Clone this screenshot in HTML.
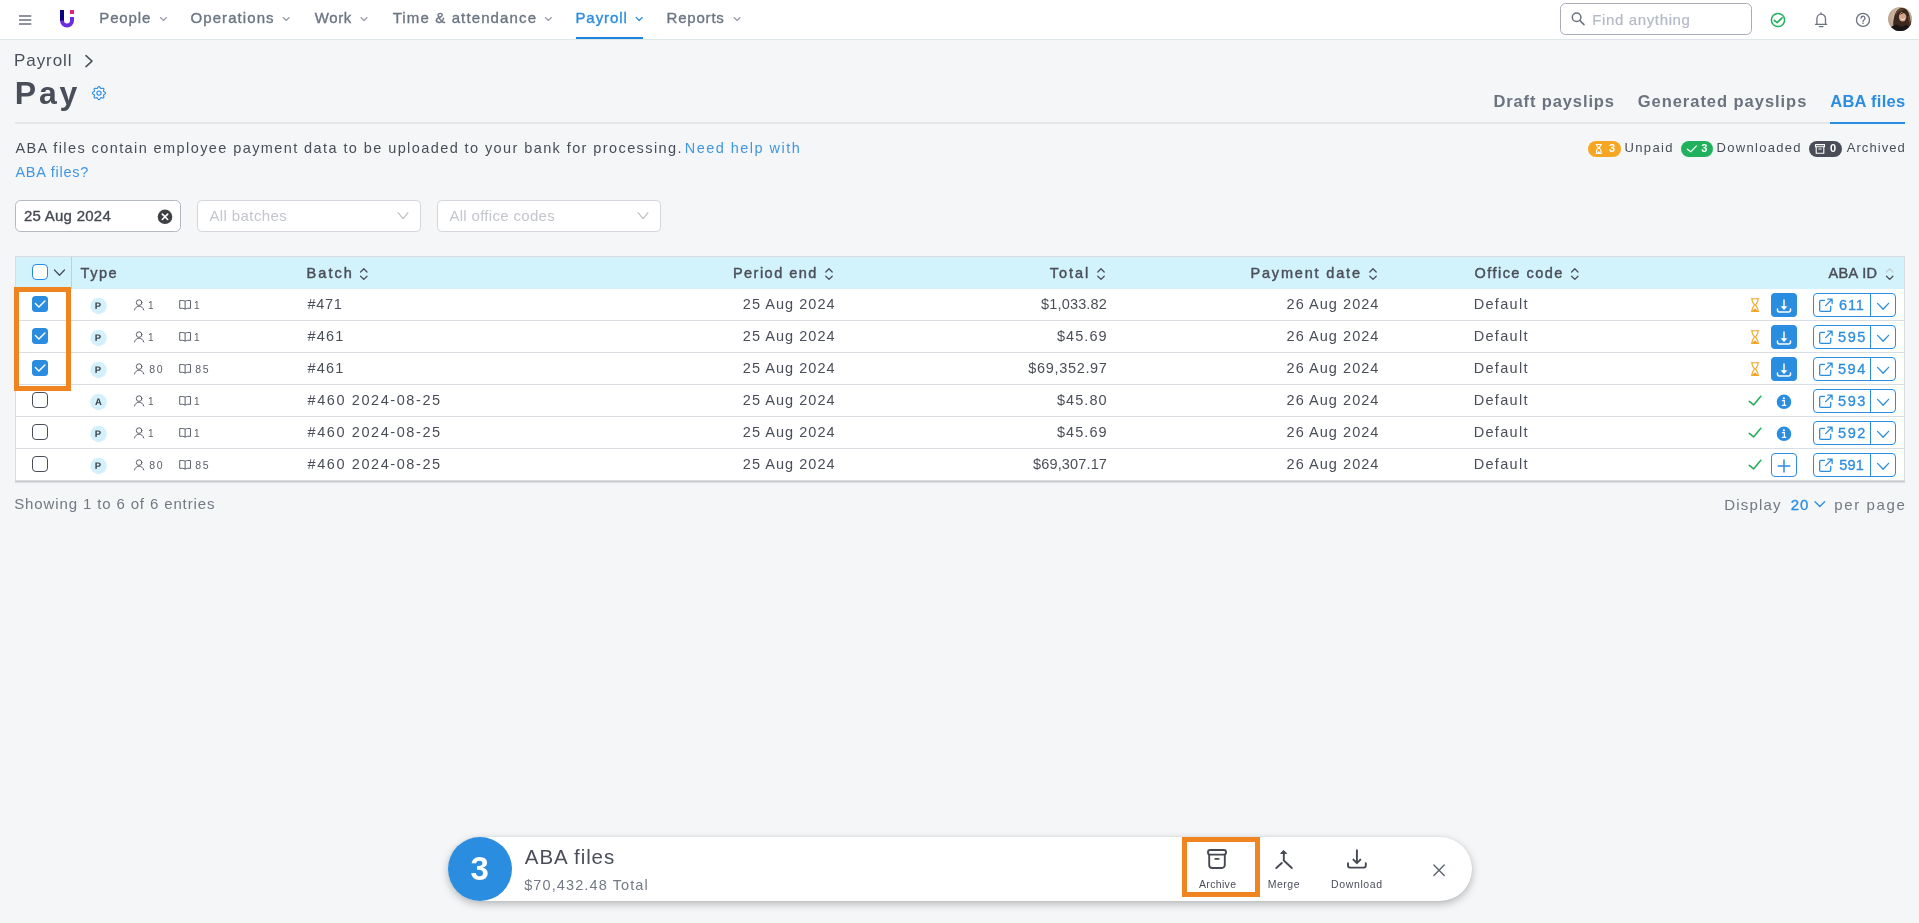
<!DOCTYPE html>
<html lang="en"><head><meta charset="utf-8"><title>Pay - ABA files</title>
<style>
*{box-sizing:border-box;margin:0;padding:0}
html,body{width:1919px;height:923px;overflow:hidden;background:#f4f6f8;font-family:"Liberation Sans",sans-serif}
.t{position:absolute;white-space:pre;line-height:20px;font-family:"Liberation Sans",sans-serif}
.a{position:absolute}
svg{position:absolute;overflow:visible}
#texts{position:absolute;left:0;top:0;width:1919px;height:923px;will-change:transform}

</style></head>
<body>
<!-- NAV -->
<div class="a" style="left:0;top:0;width:1919px;height:40px;background:#fff;border-bottom:1px solid #dde5e8"></div>
<svg style="left:0;top:0" width="1919" height="40" viewBox="0 0 1919 40" fill="none">
  <!-- hamburger -->
  <g stroke="#6b7280" stroke-width="1.7"><path d="M19 16H31.3M19 20H31.3M19 24H31.3"/></g>
  <!-- logo -->
  <rect x="60" y="10" width="4" height="11" fill="#0a0082"/>
  <rect x="70" y="10" width="4" height="4" fill="#e8207c"/>
  <path d="M60 20.5 A7 7 0 0 0 74 20.5 V17 H70 V20.5 A3 3 0 0 1 64 20.5 Z" fill="#6a2ce0"/>
  <!-- nav chevrons -->
  <g stroke="#949ba7" stroke-width="1.1" stroke-linecap="round" stroke-linejoin="round">
    <path d="M160.5 17.5l3 3 3-3"/><path d="M283.2 17.5l3 3 3-3"/><path d="M361 17.5l3 3 3-3"/>
    <path d="M545.3 17.5l3 3 3-3"/><path d="M734.1 17.5l3 3 3-3"/>
  </g>
  <path d="M636.2 17.5l3 3 3-3" stroke="#2b8ddf" stroke-width="1.2" stroke-linecap="round" stroke-linejoin="round"/>
  <rect x="576" y="37" width="67" height="2" fill="#1f84dc"/>
  <!-- search -->
  <rect x="1560.5" y="3.5" width="191" height="31" rx="5" fill="#fff" stroke="#a9adbb"/>
  <g stroke="#6b7280" stroke-width="1.5" stroke-linecap="round"><circle cx="1576.6" cy="17.2" r="4.3"/><path d="M1580 20.6l4 4"/></g>
  <!-- status check -->
  <circle cx="1778" cy="20" r="6.6" stroke="#21b15d" stroke-width="1.5"/>
  <path d="M1774.3 20.3l2.8 2.3 4.9-4.8" stroke="#21b15d" stroke-width="1.7" stroke-linecap="round" stroke-linejoin="round"/>
  <!-- bell -->
  <g stroke="#6b7280" stroke-width="1.3" stroke-linecap="round" stroke-linejoin="round">
    <path d="M1815.5 24.3h11.2M1816.9 24.3v-5.6a4.3 4.6 0 0 1 8.6 0v5.6M1819.4 26.6h3.6"/>
    <path d="M1821 13.8v-.8"/>
  </g>
  <!-- help -->
  <circle cx="1863" cy="19.9" r="6.5" stroke="#6b7280" stroke-width="1.3"/>
  <path d="M1861 18.2a2 2 0 1 1 2.9 1.8c-.6.4-.9.7-.9 1.5" stroke="#6b7280" stroke-width="1.3" stroke-linecap="round"/>
  <circle cx="1863" cy="23.3" r=".8" fill="#6b7280"/>
  <!-- avatar -->
  <defs><clipPath id="av"><circle cx="1900" cy="19" r="12"/></clipPath>
  <radialGradient id="avbg" cx=".5" cy=".4" r=".7"><stop offset="0" stop-color="#d9c4b0"/><stop offset="1" stop-color="#b39b86"/></radialGradient></defs>
  <g clip-path="url(#av)">
    <rect x="1888" y="7" width="24" height="24" fill="url(#avbg)"/>
    <path d="M1894.500 29c-1.500-3-1.800-7-.5-11 .8-5 3.500-9.500 7.500-10 4.500-.5 7 3 7.800 7 .8 4 1.700 8 2.700 11l-4 5h-12z" fill="#3b281e"/>
    <path d="M1896 14c1.500-3 4-4.500 6.500-4.500M1908.500 17c.8 3 1.200 6 2.200 8.500" stroke="#6a4935" stroke-width="1.300" fill="none" stroke-linecap="round"/>
    <ellipse cx="1902.600" cy="16.800" rx="3.700" ry="4.800" fill="#d4a488"/>
    <path d="M1899 14.500c1.500-.5 4-2 5-4 1 1.500 2 3 2.600 5-1-1-2-2-2.800-2.400-1.200 1-3 1.600-4.800 1.400z" fill="#3b281e"/>
    <path d="M1901 18.800c1 1 2.400 1 3.400 0" stroke="#fff" stroke-width=".9" fill="none" stroke-linecap="round"/>
    <path d="M1889 31c1-4 4-6 8-6.500 1.500 1.500 3 2 4.500 2 1.500 0 3-.5 4-1.800 2.500.8 4.500 2.800 5.500 6.300z" fill="#191516"/>
  </g>
</svg>
<!-- HEADER AREA -->
<div class="a" style="left:15px;top:122px;width:1889px;height:2px;background:#e3e5e9"></div>
<div class="a" style="left:1830px;top:122px;width:75px;height:2px;background:#2b8ddf"></div>
<svg style="left:0;top:40px" width="1919" height="200" viewBox="0 40 1919 200" fill="none">
  <path d="M86 55.600l6 5.500-6 5.500" stroke="#4a4e58" stroke-width="1.5" stroke-linecap="round" stroke-linejoin="round"/>
  <!-- gear -->
  <g stroke="#2b8ddf" stroke-width="1.150" stroke-linejoin="round">
    <path d="M99.00 86.60 L99.42 86.71 L99.80 87.03 L100.12 87.46 L100.39 87.91 L100.64 88.27 L100.91 88.48 L101.26 88.53 L101.69 88.45 L102.19 88.32 L102.73 88.24 L103.22 88.29 L103.60 88.50 L103.81 88.88 L103.86 89.37 L103.78 89.91 L103.65 90.41 L103.57 90.84 L103.62 91.19 L103.83 91.46 L104.19 91.71 L104.64 91.98 L105.07 92.30 L105.39 92.68 L105.50 93.10 L105.39 93.52 L105.07 93.90 L104.64 94.22 L104.19 94.49 L103.83 94.74 L103.62 95.01 L103.57 95.36 L103.65 95.79 L103.78 96.29 L103.86 96.83 L103.81 97.32 L103.60 97.70 L103.22 97.91 L102.73 97.96 L102.19 97.88 L101.69 97.75 L101.26 97.67 L100.91 97.72 L100.64 97.93 L100.39 98.29 L100.12 98.74 L99.80 99.17 L99.42 99.49 L99.00 99.60 L98.58 99.49 L98.20 99.17 L97.88 98.74 L97.61 98.29 L97.36 97.93 L97.09 97.72 L96.74 97.67 L96.31 97.75 L95.81 97.88 L95.27 97.96 L94.78 97.91 L94.40 97.70 L94.19 97.32 L94.14 96.83 L94.22 96.29 L94.35 95.79 L94.43 95.36 L94.38 95.01 L94.17 94.74 L93.81 94.49 L93.36 94.22 L92.93 93.90 L92.61 93.52 L92.50 93.10 L92.61 92.68 L92.93 92.30 L93.36 91.98 L93.81 91.71 L94.17 91.46 L94.38 91.19 L94.43 90.84 L94.35 90.41 L94.22 89.91 L94.14 89.37 L94.19 88.88 L94.40 88.50 L94.78 88.29 L95.27 88.24 L95.81 88.32 L96.31 88.45 L96.74 88.53 L97.09 88.48 L97.36 88.27 L97.61 87.91 L97.88 87.46 L98.20 87.03 L98.58 86.71Z"/>
    <circle cx="99" cy="93.1" r="2.100"/>
  </g>
  <!-- badges -->
  <rect x="1588" y="141" width="33" height="16" rx="8" fill="#f5a623"/>
  <path d="M1596 144.500h5.500M1596 153.500h5.500M1596.600 144.500c0 3 4.300 3.600 4.300 6v3M1600.900 144.500c0 3-4.300 3.600-4.300 6v3" stroke="#fff" stroke-width="1.100" stroke-linecap="round"/>
  <path d="M1597 153.300l1.750-2.200 1.750 2.200z" fill="#fff"/>
  <rect x="1681" y="141" width="32" height="16" rx="8" fill="#21b15d"/>
  <path d="M1687.300 149.200l3.500 2.600 5.600-5.900" stroke="#fff" stroke-width="1.200" stroke-linecap="round" stroke-linejoin="round"/>
  <rect x="1809" y="141" width="33" height="16" rx="8" fill="#4a4d57"/>
  <g stroke="#fff" stroke-width="1.100" stroke-linejoin="round"><path d="M1815.500 144.600h9v2.200h-9z"/><path d="M1816.200 146.800v6.400h7.600v-6.400"/><path d="M1818.800 149h2.400" stroke-linecap="round"/></g>
  <!-- filters -->
  <rect x="15.500" y="200.500" width="165" height="31" rx="5" fill="#fff" stroke="#b4b8c5"/>
  <circle cx="165" cy="216.800" r="7.300" fill="#3f4045"/>
  <path d="M162.300 214.100l5.400 5.400M167.700 214.100l-5.400 5.400" stroke="#fff" stroke-width="1.600" stroke-linecap="round"/>
  <rect x="197.500" y="200.500" width="223" height="31" rx="4" fill="#fff" stroke="#d3d6dc"/>
  <path d="M398 212.700l5 6 5-6" stroke="#b9bcc4" stroke-width="1.100" stroke-linecap="round" stroke-linejoin="round"/>
  <rect x="437.500" y="200.500" width="223" height="31" rx="4" fill="#fff" stroke="#d3d6dc"/>
  <path d="M638 212.700l5 6 5-6" stroke="#b9bcc4" stroke-width="1.100" stroke-linecap="round" stroke-linejoin="round"/>
</svg>
<!-- TABLE -->
<div class="a" style="left:15px;top:256px;width:1890px;height:224px;background:#fff;border:1px solid #d9dbdf;border-bottom:0"></div>
<div class="a" style="left:15px;top:480px;width:1890px;height:1px;background:#d9dbde"></div>
<div class="a" style="left:15px;top:481px;width:1890px;height:1px;background:#c6c7ca"></div>
<div class="a" style="left:15px;top:482px;width:1890px;height:1px;background:#e0e2e5"></div>
<div class="a" style="left:15px;top:483px;width:1890px;height:1px;background:#eef0f2"></div>
<div class="a" style="left:16px;top:257px;width:1888px;height:32px;background:#d2f3fc"></div>
<div class="a" style="left:71px;top:257px;width:1px;height:32px;background:#c3cfd6"></div>
<div class="a" style="left:16px;top:320px;width:1888px;height:1px;background:#d9dce1"></div>
<div class="a" style="left:16px;top:352px;width:1888px;height:1px;background:#d9dce1"></div>
<div class="a" style="left:16px;top:384px;width:1888px;height:1px;background:#d9dce1"></div>
<div class="a" style="left:16px;top:416px;width:1888px;height:1px;background:#d9dce1"></div>
<div class="a" style="left:16px;top:448px;width:1888px;height:1px;background:#d9dce1"></div>
<svg style="left:0;top:250px" width="1919" height="240" viewBox="0 250 1919 240" fill="none">
<rect x="32.500" y="264.500" width="15" height="15" rx="3.500" fill="#fff" stroke="#2b8ddf"/>
<path d="M54.500 270l5 5.300 5-5.300" stroke="#4a4e58" stroke-width="1.300" stroke-linecap="round" stroke-linejoin="round"/>
<path d="M360.6 272l3.200-3.200 3.200 3.200" stroke="#4a4e58" stroke-width="1.300" stroke-linecap="round" stroke-linejoin="round"/>
<path d="M360.6 276.200l3.200 3.200 3.200-3.200" stroke="#4a4e58" stroke-width="1.300" stroke-linecap="round" stroke-linejoin="round"/>
<path d="M825.8 272l3.200-3.200 3.200 3.200" stroke="#4a4e58" stroke-width="1.300" stroke-linecap="round" stroke-linejoin="round"/>
<path d="M825.8 276.200l3.200 3.200 3.200-3.200" stroke="#4a4e58" stroke-width="1.300" stroke-linecap="round" stroke-linejoin="round"/>
<path d="M1097.8 272l3.200-3.200 3.200 3.200" stroke="#4a4e58" stroke-width="1.300" stroke-linecap="round" stroke-linejoin="round"/>
<path d="M1097.8 276.200l3.200 3.200 3.200-3.200" stroke="#4a4e58" stroke-width="1.300" stroke-linecap="round" stroke-linejoin="round"/>
<path d="M1369.8 272l3.200-3.200 3.200 3.200" stroke="#4a4e58" stroke-width="1.300" stroke-linecap="round" stroke-linejoin="round"/>
<path d="M1369.8 276.200l3.200 3.200 3.200-3.200" stroke="#4a4e58" stroke-width="1.300" stroke-linecap="round" stroke-linejoin="round"/>
<path d="M1571.6 272l3.200-3.200 3.200 3.200" stroke="#4a4e58" stroke-width="1.300" stroke-linecap="round" stroke-linejoin="round"/>
<path d="M1571.6 276.200l3.200 3.200 3.200-3.200" stroke="#4a4e58" stroke-width="1.300" stroke-linecap="round" stroke-linejoin="round"/>
<path d="M1886.5 272l3.200-3.200 3.200 3.200" stroke="#c5cdd3" stroke-width="1.300" stroke-linecap="round" stroke-linejoin="round"/>
<path d="M1886.5 276.200l3.200 3.200 3.200-3.200" stroke="#4a4e58" stroke-width="1.300" stroke-linecap="round" stroke-linejoin="round"/>
<rect x="32" y="296" width="16" height="16" rx="3.500" fill="#2b8ddf"/>
<path d="M35.400 303.6l3.500 3.400 6-6.100" stroke="#fff" stroke-width="1.400" stroke-linecap="round" stroke-linejoin="round"/>
<circle cx="98.500" cy="306" r="8.300" fill="#d4f1fb"/>
<g stroke="#5a5f69" stroke-width="1" stroke-linecap="round"><circle cx="139.100" cy="302.6" r="2.800"/><path d="M134.400 310c.8-2.600 2.700-3.800 4.700-3.800s3.900 1.200 4.700 3.800"/></g>
<g stroke="#5a5f69" stroke-width="1" stroke-linejoin="round"><path d="M185.100 301.2c-1.400-.7-3.400-.9-5.400-.6v7.800c2-.3 4-.1 5.400.7c1.400-.8 3.400-1 5.400-.7v-7.800c-2-.3-4-.1-5.400.6z"/><path d="M185.100 301.2v7.900"/></g>
<g stroke="#f5a623" stroke-width="1.150" stroke-linecap="round" stroke-linejoin="round" fill="none"><path d="M1751.400 298.7H1758.600M1751.400 311.3H1758.600"/><path d="M1752.100 298.7V300.3C1752.100 302.9 1754.400 303.9 1754.400 305.0C1754.400 306.1 1752.100 307.1 1752.100 309.7V311.3"/><path d="M1757.900 298.7V300.3C1757.900 302.9 1755.600 303.9 1755.600 305.0C1755.600 306.1 1757.900 307.1 1757.900 309.7V311.3"/></g><path d="M1752.700 311.3C1753.300 309.4 1754.200 308.6 1755 308.6S1756.700 309.4 1757.300 311.3Z" fill="#f5a623"/>
<rect x="1771" y="293" width="26" height="24" rx="4" fill="#2b8ddf"/>
<g stroke="#fff" stroke-width="1.500" stroke-linecap="round" stroke-linejoin="round"><path d="M1784 300v8.500"/><path d="M1777.500 309v1.600a1.400 1.400 0 0 0 1.400 1.400h10.200a1.400 1.400 0 0 0 1.400-1.400v-1.600"/></g>
<path d="M1781.300 306.6h5.400l-2.700 3z" fill="#fff" stroke="#fff" stroke-width=".8" stroke-linejoin="round"/>
<rect x="1813.500" y="293.5" width="82" height="23" rx="3.500" fill="#fff" stroke="#2b8ddf"/>
<path d="M1870.500 293.5v23" stroke="#2b8ddf"/>
<g stroke="#2b8ddf" stroke-width="1.300" stroke-linecap="round" stroke-linejoin="round"><path d="M1824.500 300.3h-3.600a1.200 1.200 0 0 0-1.200 1.200v8.600a1.200 1.200 0 0 0 1.200 1.200h8.600a1.200 1.200 0 0 0 1.200-1.200v-3.800"/><path d="M1825.600 305.6l6.400-6.400M1827.800 299.2h4.300v4.300"/></g>
<path d="M1877.600 303.4l5.500 5.800 5.500-5.800" stroke="#2b8ddf" stroke-width="1.300" stroke-linecap="round" stroke-linejoin="round"/>
<rect x="32" y="328" width="16" height="16" rx="3.500" fill="#2b8ddf"/>
<path d="M35.400 335.6l3.500 3.400 6-6.100" stroke="#fff" stroke-width="1.400" stroke-linecap="round" stroke-linejoin="round"/>
<circle cx="98.500" cy="338" r="8.300" fill="#d4f1fb"/>
<g stroke="#5a5f69" stroke-width="1" stroke-linecap="round"><circle cx="139.100" cy="334.6" r="2.800"/><path d="M134.400 342c.8-2.600 2.700-3.800 4.700-3.800s3.900 1.200 4.700 3.800"/></g>
<g stroke="#5a5f69" stroke-width="1" stroke-linejoin="round"><path d="M185.100 333.2c-1.400-.7-3.400-.9-5.400-.6v7.800c2-.3 4-.1 5.400.7c1.400-.8 3.400-1 5.400-.7v-7.800c-2-.3-4-.1-5.400.6z"/><path d="M185.100 333.2v7.900"/></g>
<g stroke="#f5a623" stroke-width="1.150" stroke-linecap="round" stroke-linejoin="round" fill="none"><path d="M1751.400 330.7H1758.600M1751.400 343.3H1758.600"/><path d="M1752.100 330.7V332.3C1752.100 334.9 1754.400 335.9 1754.400 337.0C1754.400 338.1 1752.100 339.1 1752.100 341.7V343.3"/><path d="M1757.900 330.7V332.3C1757.900 334.9 1755.600 335.9 1755.600 337.0C1755.600 338.1 1757.900 339.1 1757.900 341.7V343.3"/></g><path d="M1752.700 343.3C1753.300 341.4 1754.200 340.6 1755 340.6S1756.700 341.4 1757.300 343.3Z" fill="#f5a623"/>
<rect x="1771" y="325" width="26" height="24" rx="4" fill="#2b8ddf"/>
<g stroke="#fff" stroke-width="1.500" stroke-linecap="round" stroke-linejoin="round"><path d="M1784 332v8.500"/><path d="M1777.500 341v1.600a1.400 1.400 0 0 0 1.400 1.400h10.200a1.400 1.400 0 0 0 1.400-1.400v-1.600"/></g>
<path d="M1781.300 338.6h5.400l-2.700 3z" fill="#fff" stroke="#fff" stroke-width=".8" stroke-linejoin="round"/>
<rect x="1813.500" y="325.5" width="82" height="23" rx="3.500" fill="#fff" stroke="#2b8ddf"/>
<path d="M1870.500 325.5v23" stroke="#2b8ddf"/>
<g stroke="#2b8ddf" stroke-width="1.300" stroke-linecap="round" stroke-linejoin="round"><path d="M1824.500 332.3h-3.600a1.200 1.200 0 0 0-1.200 1.200v8.600a1.200 1.200 0 0 0 1.200 1.200h8.600a1.200 1.200 0 0 0 1.200-1.200v-3.800"/><path d="M1825.600 337.6l6.400-6.400M1827.800 331.2h4.300v4.300"/></g>
<path d="M1877.600 335.4l5.500 5.800 5.500-5.800" stroke="#2b8ddf" stroke-width="1.300" stroke-linecap="round" stroke-linejoin="round"/>
<rect x="32" y="360" width="16" height="16" rx="3.500" fill="#2b8ddf"/>
<path d="M35.400 367.6l3.500 3.400 6-6.100" stroke="#fff" stroke-width="1.400" stroke-linecap="round" stroke-linejoin="round"/>
<circle cx="98.500" cy="370" r="8.300" fill="#d4f1fb"/>
<g stroke="#5a5f69" stroke-width="1" stroke-linecap="round"><circle cx="139.100" cy="366.6" r="2.800"/><path d="M134.400 374c.8-2.600 2.700-3.800 4.700-3.800s3.900 1.200 4.700 3.800"/></g>
<g stroke="#5a5f69" stroke-width="1" stroke-linejoin="round"><path d="M185.100 365.2c-1.400-.7-3.400-.9-5.400-.6v7.800c2-.3 4-.1 5.400.7c1.400-.8 3.400-1 5.400-.7v-7.800c-2-.3-4-.1-5.400.6z"/><path d="M185.100 365.2v7.900"/></g>
<g stroke="#f5a623" stroke-width="1.150" stroke-linecap="round" stroke-linejoin="round" fill="none"><path d="M1751.400 362.7H1758.600M1751.400 375.3H1758.600"/><path d="M1752.100 362.7V364.3C1752.100 366.9 1754.400 367.9 1754.400 369.0C1754.400 370.1 1752.100 371.1 1752.100 373.7V375.3"/><path d="M1757.900 362.7V364.3C1757.900 366.9 1755.600 367.9 1755.600 369.0C1755.600 370.1 1757.900 371.1 1757.900 373.7V375.3"/></g><path d="M1752.700 375.3C1753.300 373.4 1754.200 372.6 1755 372.6S1756.700 373.4 1757.300 375.3Z" fill="#f5a623"/>
<rect x="1771" y="357" width="26" height="24" rx="4" fill="#2b8ddf"/>
<g stroke="#fff" stroke-width="1.500" stroke-linecap="round" stroke-linejoin="round"><path d="M1784 364v8.500"/><path d="M1777.500 373v1.600a1.400 1.400 0 0 0 1.400 1.400h10.200a1.400 1.400 0 0 0 1.400-1.400v-1.600"/></g>
<path d="M1781.300 370.6h5.400l-2.700 3z" fill="#fff" stroke="#fff" stroke-width=".8" stroke-linejoin="round"/>
<rect x="1813.500" y="357.5" width="82" height="23" rx="3.500" fill="#fff" stroke="#2b8ddf"/>
<path d="M1870.500 357.5v23" stroke="#2b8ddf"/>
<g stroke="#2b8ddf" stroke-width="1.300" stroke-linecap="round" stroke-linejoin="round"><path d="M1824.500 364.3h-3.600a1.200 1.200 0 0 0-1.200 1.200v8.600a1.200 1.200 0 0 0 1.200 1.200h8.600a1.200 1.200 0 0 0 1.200-1.200v-3.800"/><path d="M1825.600 369.6l6.400-6.400M1827.800 363.2h4.300v4.300"/></g>
<path d="M1877.600 367.4l5.500 5.800 5.500-5.800" stroke="#2b8ddf" stroke-width="1.300" stroke-linecap="round" stroke-linejoin="round"/>
<rect x="32.500" y="392.5" width="15" height="15" rx="3.500" fill="#fff" stroke="#4a4e58"/>
<circle cx="98.500" cy="402" r="8.300" fill="#d4f1fb"/>
<g stroke="#5a5f69" stroke-width="1" stroke-linecap="round"><circle cx="139.100" cy="398.6" r="2.800"/><path d="M134.400 406c.8-2.600 2.700-3.800 4.700-3.800s3.900 1.200 4.700 3.800"/></g>
<g stroke="#5a5f69" stroke-width="1" stroke-linejoin="round"><path d="M185.100 397.2c-1.400-.7-3.400-.9-5.400-.6v7.800c2-.3 4-.1 5.400.7c1.400-.8 3.400-1 5.400-.7v-7.800c-2-.3-4-.1-5.400.6z"/><path d="M185.100 397.2v7.900"/></g>
<path d="M1749.300 401.3l4.300 3.600 7.200-8.700" stroke="#21b15d" stroke-width="1.500" stroke-linecap="round" stroke-linejoin="round"/>
<circle cx="1784" cy="401.8" r="7.300" fill="#2b8ddf"/>
<circle cx="1783.900" cy="398.3" r="1.100" fill="#fff"/>
<path d="M1782.500 400.7h1.900v4.400M1782.300 405.3h3.500" stroke="#fff" stroke-width="1.300" stroke-linecap="round" stroke-linejoin="round"/>
<rect x="1813.500" y="389.5" width="82" height="23" rx="3.500" fill="#fff" stroke="#2b8ddf"/>
<path d="M1870.500 389.5v23" stroke="#2b8ddf"/>
<g stroke="#2b8ddf" stroke-width="1.300" stroke-linecap="round" stroke-linejoin="round"><path d="M1824.500 396.3h-3.600a1.200 1.200 0 0 0-1.200 1.200v8.600a1.200 1.200 0 0 0 1.200 1.200h8.600a1.200 1.200 0 0 0 1.200-1.200v-3.800"/><path d="M1825.600 401.6l6.400-6.400M1827.800 395.2h4.300v4.300"/></g>
<path d="M1877.600 399.4l5.500 5.800 5.500-5.800" stroke="#2b8ddf" stroke-width="1.300" stroke-linecap="round" stroke-linejoin="round"/>
<rect x="32.500" y="424.5" width="15" height="15" rx="3.500" fill="#fff" stroke="#4a4e58"/>
<circle cx="98.500" cy="434" r="8.300" fill="#d4f1fb"/>
<g stroke="#5a5f69" stroke-width="1" stroke-linecap="round"><circle cx="139.100" cy="430.6" r="2.800"/><path d="M134.400 438c.8-2.600 2.700-3.800 4.700-3.800s3.900 1.200 4.700 3.800"/></g>
<g stroke="#5a5f69" stroke-width="1" stroke-linejoin="round"><path d="M185.100 429.2c-1.400-.7-3.400-.9-5.400-.6v7.800c2-.3 4-.1 5.400.7c1.400-.8 3.400-1 5.400-.7v-7.800c-2-.3-4-.1-5.400.6z"/><path d="M185.100 429.2v7.900"/></g>
<path d="M1749.300 433.3l4.300 3.600 7.200-8.700" stroke="#21b15d" stroke-width="1.500" stroke-linecap="round" stroke-linejoin="round"/>
<circle cx="1784" cy="433.8" r="7.300" fill="#2b8ddf"/>
<circle cx="1783.900" cy="430.3" r="1.100" fill="#fff"/>
<path d="M1782.500 432.7h1.900v4.400M1782.300 437.3h3.500" stroke="#fff" stroke-width="1.300" stroke-linecap="round" stroke-linejoin="round"/>
<rect x="1813.500" y="421.5" width="82" height="23" rx="3.500" fill="#fff" stroke="#2b8ddf"/>
<path d="M1870.500 421.5v23" stroke="#2b8ddf"/>
<g stroke="#2b8ddf" stroke-width="1.300" stroke-linecap="round" stroke-linejoin="round"><path d="M1824.500 428.3h-3.600a1.200 1.200 0 0 0-1.200 1.200v8.600a1.200 1.200 0 0 0 1.200 1.200h8.600a1.200 1.200 0 0 0 1.200-1.200v-3.800"/><path d="M1825.600 433.6l6.400-6.400M1827.800 427.2h4.300v4.300"/></g>
<path d="M1877.600 431.4l5.500 5.800 5.500-5.800" stroke="#2b8ddf" stroke-width="1.300" stroke-linecap="round" stroke-linejoin="round"/>
<rect x="32.500" y="456.5" width="15" height="15" rx="3.500" fill="#fff" stroke="#4a4e58"/>
<circle cx="98.500" cy="466" r="8.300" fill="#d4f1fb"/>
<g stroke="#5a5f69" stroke-width="1" stroke-linecap="round"><circle cx="139.100" cy="462.6" r="2.800"/><path d="M134.400 470c.8-2.600 2.700-3.800 4.700-3.800s3.900 1.200 4.700 3.800"/></g>
<g stroke="#5a5f69" stroke-width="1" stroke-linejoin="round"><path d="M185.100 461.2c-1.400-.7-3.400-.9-5.400-.6v7.800c2-.3 4-.1 5.400.7c1.400-.8 3.400-1 5.400-.7v-7.800c-2-.3-4-.1-5.400.6z"/><path d="M185.100 461.2v7.900"/></g>
<path d="M1749.300 465.3l4.300 3.600 7.200-8.700" stroke="#21b15d" stroke-width="1.500" stroke-linecap="round" stroke-linejoin="round"/>
<rect x="1771.500" y="453.5" width="25" height="23" rx="3.500" fill="#fff" stroke="#2b8ddf"/>
<path d="M1778.200 466h11.600M1784 460v12" stroke="#2b8ddf" stroke-width="1.500" stroke-linecap="round"/>
<rect x="1813.500" y="453.5" width="82" height="23" rx="3.500" fill="#fff" stroke="#2b8ddf"/>
<path d="M1870.500 453.5v23" stroke="#2b8ddf"/>
<g stroke="#2b8ddf" stroke-width="1.300" stroke-linecap="round" stroke-linejoin="round"><path d="M1824.500 460.3h-3.600a1.200 1.200 0 0 0-1.200 1.200v8.600a1.200 1.200 0 0 0 1.200 1.200h8.600a1.200 1.200 0 0 0 1.200-1.200v-3.800"/><path d="M1825.600 465.6l6.400-6.400M1827.800 459.2h4.300v4.300"/></g>
<path d="M1877.600 463.4l5.500 5.800 5.500-5.800" stroke="#2b8ddf" stroke-width="1.300" stroke-linecap="round" stroke-linejoin="round"/>
<rect x="16.500" y="289.500" width="52" height="99" stroke="#f08421" stroke-width="5"/>
</svg>
<svg style="left:1810px;top:495px" width="20" height="20" viewBox="1810 495 20 20" fill="none"><path d="M1815 501.700l4.800 4.800 4.800-4.800" stroke="#2b8ddf" stroke-width="1.300" stroke-linecap="round" stroke-linejoin="round"/></svg>
<!-- BOTTOM BAR -->
<div class="a" style="left:448px;top:837px;width:1024px;height:64px;border-radius:32px;background:#fff;box-shadow:0 3px 9px rgba(0,0,0,.26),0 0 2px rgba(0,0,0,.08)"></div>
<div class="a" style="left:448px;top:837px;width:64px;height:64px;border-radius:32px;background:#2b8ddf"></div>
<svg style="left:1180px;top:835px" width="300" height="70" viewBox="1180 835 300 70" fill="none">
  <g stroke="#454953" stroke-width="1.900" stroke-linecap="round" stroke-linejoin="round">
    <!-- archive -->
    <rect x="1208" y="850" width="18" height="4.600" rx="2.200"/>
    <path d="M1209.200 855v10a3 3 0 0 0 3 3h9.600a3 3 0 0 0 3-3v-10"/>
    <path d="M1215.300 858.900h3.400"/>
    <!-- merge -->
    <path d="M1283.800 852.500v8l8 7.500M1281.800 863l-5.500 5"/>
    <path d="M1281 853.400h5.600l-2.800-2.800z" fill="#454953" stroke-width="1"/>
    <!-- download -->
    <path d="M1356.900 850.200v12.600M1353.400 859.600l3.500 3.600 3.500-3.600"/>
    <path d="M1348 863.200v2.400a2 2 0 0 0 2 2h13.800a2 2 0 0 0 2-2v-2.400"/>
  </g>
  <!-- close -->
  <path d="M1433.900 865.100l10.300 10.300M1444.200 865.100l-10.300 10.300" stroke="#5d6470" stroke-width="1.400" stroke-linecap="round"/>
  <rect x="1184.500" y="839.500" width="73" height="55" stroke="#f08421" stroke-width="5"/>
</svg>

<div id="texts">
<span class="t" style="left:99.30px;top:8px;font-size:15px;color:#6b7583;letter-spacing:0.85px;-webkit-text-stroke:0.35px #6b7583">People</span>
<span class="t" style="left:190.50px;top:8px;font-size:15px;color:#6b7583;letter-spacing:1.078px;-webkit-text-stroke:0.35px #6b7583">Operations</span>
<span class="t" style="left:314.75px;top:8px;font-size:15px;color:#6b7583;letter-spacing:0.583px;-webkit-text-stroke:0.35px #6b7583">Work</span>
<span class="t" style="left:392.65px;top:8px;font-size:15px;color:#6b7583;letter-spacing:1.125px;-webkit-text-stroke:0.35px #6b7583">Time &amp; attendance</span>
<span class="t" style="left:575.40px;top:8px;font-size:15px;color:#2b8ddf;letter-spacing:0.95px;-webkit-text-stroke:0.35px #2b8ddf">Payroll</span>
<span class="t" style="left:666.50px;top:8px;font-size:15px;color:#6b7583;letter-spacing:0.808px;-webkit-text-stroke:0.35px #6b7583">Reports</span>
<span class="t" style="left:1592.30px;top:10px;font-size:15px;color:#b4b9c6;letter-spacing:0.629px;-webkit-text-stroke:0.2px #b4b9c6">Find anything</span>
<span class="t" style="left:14.10px;top:51px;font-size:17px;color:#4a4e58;letter-spacing:0.908px">Payroll</span>
<span class="t" style="left:14.65px;top:83px;font-size:32px;color:#4a4e58;letter-spacing:2.9px;font-weight:700">Pay</span>
<span class="t" style="left:1493.40px;top:91px;font-size:16.5px;color:#6b7380;letter-spacing:0.885px;font-weight:700">Draft payslips</span>
<span class="t" style="left:1637.75px;top:91px;font-size:16.5px;color:#6b7380;letter-spacing:0.962px;font-weight:700">Generated payslips</span>
<span class="t" style="left:1830.20px;top:91px;font-size:16.5px;color:#2b8ddf;letter-spacing:0.275px;font-weight:700">ABA files</span>
<span class="t" style="left:15.40px;top:138px;font-size:14.5px;color:#4a4e58;letter-spacing:1.41px">ABA files contain employee payment data to be uploaded to your bank for processing.</span>
<span class="t" style="left:684.75px;top:138px;font-size:14.5px;color:#3f97e3;letter-spacing:1.465px">Need help with</span>
<span class="t" style="left:15.40px;top:162px;font-size:14.5px;color:#3f97e3;letter-spacing:0.767px">ABA files?</span>
<span class="t" style="left:1608.90px;top:138px;font-size:11px;color:#ffffff;letter-spacing:0px;font-weight:700">3</span>
<span class="t" style="left:1624.60px;top:138px;font-size:13px;color:#4a4e58;letter-spacing:1.33px">Unpaid</span>
<span class="t" style="left:1701.25px;top:138px;font-size:11px;color:#ffffff;letter-spacing:0px;font-weight:700">3</span>
<span class="t" style="left:1716.50px;top:138px;font-size:13px;color:#4a4e58;letter-spacing:1.311px">Downloaded</span>
<span class="t" style="left:1830.03px;top:138px;font-size:11px;color:#ffffff;letter-spacing:0px;font-weight:700">0</span>
<span class="t" style="left:1846.70px;top:138px;font-size:13px;color:#4a4e58;letter-spacing:1.079px">Archived</span>
<span class="t" style="left:24.00px;top:206px;font-size:15px;color:#454952;letter-spacing:0.25px;-webkit-text-stroke:0.35px #454952">25 Aug 2024</span>
<span class="t" style="left:209.40px;top:206px;font-size:15px;color:#c3c6cd;letter-spacing:0.405px">All batches</span>
<span class="t" style="left:449.40px;top:206px;font-size:15px;color:#c3c6cd;letter-spacing:0.313px">All office codes</span>
<span class="t" style="left:80.60px;top:263px;font-size:14.5px;color:#4a4e58;letter-spacing:1.533px;-webkit-text-stroke:0.42px #4a4e58">Type</span>
<span class="t" style="left:306.60px;top:263px;font-size:14.5px;color:#4a4e58;letter-spacing:2.037px;-webkit-text-stroke:0.42px #4a4e58">Batch</span>
<span class="t" style="left:732.90px;top:263px;font-size:14.5px;color:#4a4e58;letter-spacing:1.478px;-webkit-text-stroke:0.42px #4a4e58">Period end</span>
<span class="t" style="left:1049.80px;top:263px;font-size:14.5px;color:#4a4e58;letter-spacing:1.95px;-webkit-text-stroke:0.42px #4a4e58">Total</span>
<span class="t" style="left:1250.50px;top:263px;font-size:14.5px;color:#4a4e58;letter-spacing:1.818px;-webkit-text-stroke:0.42px #4a4e58">Payment date</span>
<span class="t" style="left:1474.40px;top:263px;font-size:14.5px;color:#4a4e58;letter-spacing:1.485px;-webkit-text-stroke:0.42px #4a4e58">Office code</span>
<span class="t" style="left:1828.45px;top:263px;font-size:14.5px;color:#4a4e58;letter-spacing:0.38px;-webkit-text-stroke:0.42px #4a4e58">ABA ID</span>
<span class="t" style="left:94.83px;top:297px;font-size:9.5px;color:#3c4049;letter-spacing:0px;font-weight:700;text-rendering:geometricPrecision">P</span>
<span class="t" style="left:148.07px;top:296px;font-size:10px;color:#5a5f69;letter-spacing:0px">1</span>
<span class="t" style="left:193.98px;top:296px;font-size:10px;color:#5a5f69;letter-spacing:0px">1</span>
<span class="t" style="left:307.60px;top:294px;font-size:14.5px;color:#4a4e58;letter-spacing:0.667px">#471</span>
<span class="t" style="left:742.85px;top:294px;font-size:14.5px;color:#4a4e58;letter-spacing:1.035px">25 Aug 2024</span>
<span class="t" style="left:1041.05px;top:294px;font-size:14.5px;color:#4a4e58;letter-spacing:0.162px">$1,033.82</span>
<span class="t" style="left:1286.55px;top:294px;font-size:14.5px;color:#4a4e58;letter-spacing:1.045px">26 Aug 2024</span>
<span class="t" style="left:1473.65px;top:294px;font-size:14.5px;color:#4a4e58;letter-spacing:1.333px">Default</span>
<span class="t" style="left:1839.10px;top:295px;font-size:14.5px;color:#2b8ddf;letter-spacing:0.8px;-webkit-text-stroke:0.3px #2b8ddf">611</span>
<span class="t" style="left:94.83px;top:329px;font-size:9.5px;color:#3c4049;letter-spacing:0px;font-weight:700;text-rendering:geometricPrecision">P</span>
<span class="t" style="left:148.07px;top:328px;font-size:10px;color:#5a5f69;letter-spacing:0px">1</span>
<span class="t" style="left:193.98px;top:328px;font-size:10px;color:#5a5f69;letter-spacing:0px">1</span>
<span class="t" style="left:307.60px;top:326px;font-size:14.5px;color:#4a4e58;letter-spacing:1.133px">#461</span>
<span class="t" style="left:742.85px;top:326px;font-size:14.5px;color:#4a4e58;letter-spacing:1.035px">25 Aug 2024</span>
<span class="t" style="left:1056.95px;top:326px;font-size:14.5px;color:#4a4e58;letter-spacing:1.08px">$45.69</span>
<span class="t" style="left:1286.55px;top:326px;font-size:14.5px;color:#4a4e58;letter-spacing:1.045px">26 Aug 2024</span>
<span class="t" style="left:1473.65px;top:326px;font-size:14.5px;color:#4a4e58;letter-spacing:1.333px">Default</span>
<span class="t" style="left:1838.10px;top:327px;font-size:14.5px;color:#2b8ddf;letter-spacing:1.525px;-webkit-text-stroke:0.3px #2b8ddf">595</span>
<span class="t" style="left:94.83px;top:361px;font-size:9.5px;color:#3c4049;letter-spacing:0px;font-weight:700;text-rendering:geometricPrecision">P</span>
<span class="t" style="left:149.20px;top:359px;font-size:10.5px;color:#5a5f69;letter-spacing:1.75px">80</span>
<span class="t" style="left:195.30px;top:359px;font-size:10.5px;color:#5a5f69;letter-spacing:1.65px">85</span>
<span class="t" style="left:307.60px;top:358px;font-size:14.5px;color:#4a4e58;letter-spacing:1.133px">#461</span>
<span class="t" style="left:742.85px;top:358px;font-size:14.5px;color:#4a4e58;letter-spacing:1.035px">25 Aug 2024</span>
<span class="t" style="left:1028.35px;top:358px;font-size:14.5px;color:#4a4e58;letter-spacing:0.667px">$69,352.97</span>
<span class="t" style="left:1286.55px;top:358px;font-size:14.5px;color:#4a4e58;letter-spacing:1.045px">26 Aug 2024</span>
<span class="t" style="left:1473.65px;top:358px;font-size:14.5px;color:#4a4e58;letter-spacing:1.333px">Default</span>
<span class="t" style="left:1837.90px;top:359px;font-size:14.5px;color:#2b8ddf;letter-spacing:1.65px;-webkit-text-stroke:0.3px #2b8ddf">594</span>
<span class="t" style="left:94.93px;top:393px;font-size:9.5px;color:#3c4049;letter-spacing:0px;font-weight:700;text-rendering:geometricPrecision">A</span>
<span class="t" style="left:148.07px;top:392px;font-size:10px;color:#5a5f69;letter-spacing:0px">1</span>
<span class="t" style="left:193.98px;top:392px;font-size:10px;color:#5a5f69;letter-spacing:0px">1</span>
<span class="t" style="left:307.60px;top:390px;font-size:14.5px;color:#4a4e58;letter-spacing:1.575px">#460 2024-08-25</span>
<span class="t" style="left:742.85px;top:390px;font-size:14.5px;color:#4a4e58;letter-spacing:1.035px">25 Aug 2024</span>
<span class="t" style="left:1056.95px;top:390px;font-size:14.5px;color:#4a4e58;letter-spacing:1.08px">$45.80</span>
<span class="t" style="left:1286.55px;top:390px;font-size:14.5px;color:#4a4e58;letter-spacing:1.045px">26 Aug 2024</span>
<span class="t" style="left:1473.65px;top:390px;font-size:14.5px;color:#4a4e58;letter-spacing:1.333px">Default</span>
<span class="t" style="left:1838.10px;top:391px;font-size:14.5px;color:#2b8ddf;letter-spacing:1.525px;-webkit-text-stroke:0.3px #2b8ddf">593</span>
<span class="t" style="left:94.83px;top:425px;font-size:9.5px;color:#3c4049;letter-spacing:0px;font-weight:700;text-rendering:geometricPrecision">P</span>
<span class="t" style="left:148.07px;top:424px;font-size:10px;color:#5a5f69;letter-spacing:0px">1</span>
<span class="t" style="left:193.98px;top:424px;font-size:10px;color:#5a5f69;letter-spacing:0px">1</span>
<span class="t" style="left:307.60px;top:422px;font-size:14.5px;color:#4a4e58;letter-spacing:1.575px">#460 2024-08-25</span>
<span class="t" style="left:742.85px;top:422px;font-size:14.5px;color:#4a4e58;letter-spacing:1.035px">25 Aug 2024</span>
<span class="t" style="left:1056.95px;top:422px;font-size:14.5px;color:#4a4e58;letter-spacing:1.08px">$45.69</span>
<span class="t" style="left:1286.55px;top:422px;font-size:14.5px;color:#4a4e58;letter-spacing:1.045px">26 Aug 2024</span>
<span class="t" style="left:1473.65px;top:422px;font-size:14.5px;color:#4a4e58;letter-spacing:1.333px">Default</span>
<span class="t" style="left:1838.10px;top:423px;font-size:14.5px;color:#2b8ddf;letter-spacing:1.525px;-webkit-text-stroke:0.3px #2b8ddf">592</span>
<span class="t" style="left:94.83px;top:457px;font-size:9.5px;color:#3c4049;letter-spacing:0px;font-weight:700;text-rendering:geometricPrecision">P</span>
<span class="t" style="left:149.20px;top:455px;font-size:10.5px;color:#5a5f69;letter-spacing:1.75px">80</span>
<span class="t" style="left:195.30px;top:455px;font-size:10.5px;color:#5a5f69;letter-spacing:1.65px">85</span>
<span class="t" style="left:307.60px;top:454px;font-size:14.5px;color:#4a4e58;letter-spacing:1.575px">#460 2024-08-25</span>
<span class="t" style="left:742.85px;top:454px;font-size:14.5px;color:#4a4e58;letter-spacing:1.035px">25 Aug 2024</span>
<span class="t" style="left:1033.05px;top:454px;font-size:14.5px;color:#4a4e58;letter-spacing:0.144px">$69,307.17</span>
<span class="t" style="left:1286.55px;top:454px;font-size:14.5px;color:#4a4e58;letter-spacing:1.045px">26 Aug 2024</span>
<span class="t" style="left:1473.65px;top:454px;font-size:14.5px;color:#4a4e58;letter-spacing:1.333px">Default</span>
<span class="t" style="left:1839.30px;top:455px;font-size:14.5px;color:#2b8ddf;letter-spacing:0.175px;-webkit-text-stroke:0.3px #2b8ddf">591</span>
<span class="t" style="left:14.25px;top:494px;font-size:15px;color:#737983;letter-spacing:0.867px">Showing 1 to 6 of 6 entries</span>
<span class="t" style="left:1724.25px;top:495px;font-size:15px;color:#737983;letter-spacing:1.192px">Display</span>
<span class="t" style="left:1790.70px;top:495px;font-size:15px;color:#2b8ddf;letter-spacing:0.85px;-webkit-text-stroke:0.3px #2b8ddf">20</span>
<span class="t" style="left:1834.20px;top:495px;font-size:15px;color:#737983;letter-spacing:1.643px">per page</span>
<span class="t" style="left:470.40px;top:859px;font-size:33px;color:#ffffff;letter-spacing:0px;font-weight:700">3</span>
<span class="t" style="left:524.80px;top:847px;font-size:20.5px;color:#4a4e58;letter-spacing:0.919px">ABA files</span>
<span class="t" style="left:524.15px;top:875px;font-size:14.5px;color:#737983;letter-spacing:1.11px">$70,432.48 Total</span>
<span class="t" style="left:1199.00px;top:874px;font-size:10.5px;color:#4a4e58;letter-spacing:0.333px">Archive</span>
<span class="t" style="left:1267.65px;top:874px;font-size:10.5px;color:#4a4e58;letter-spacing:0.55px">Merge</span>
<span class="t" style="left:1331.05px;top:874px;font-size:10.5px;color:#4a4e58;letter-spacing:0.621px">Download</span>
</div>
</body></html>
